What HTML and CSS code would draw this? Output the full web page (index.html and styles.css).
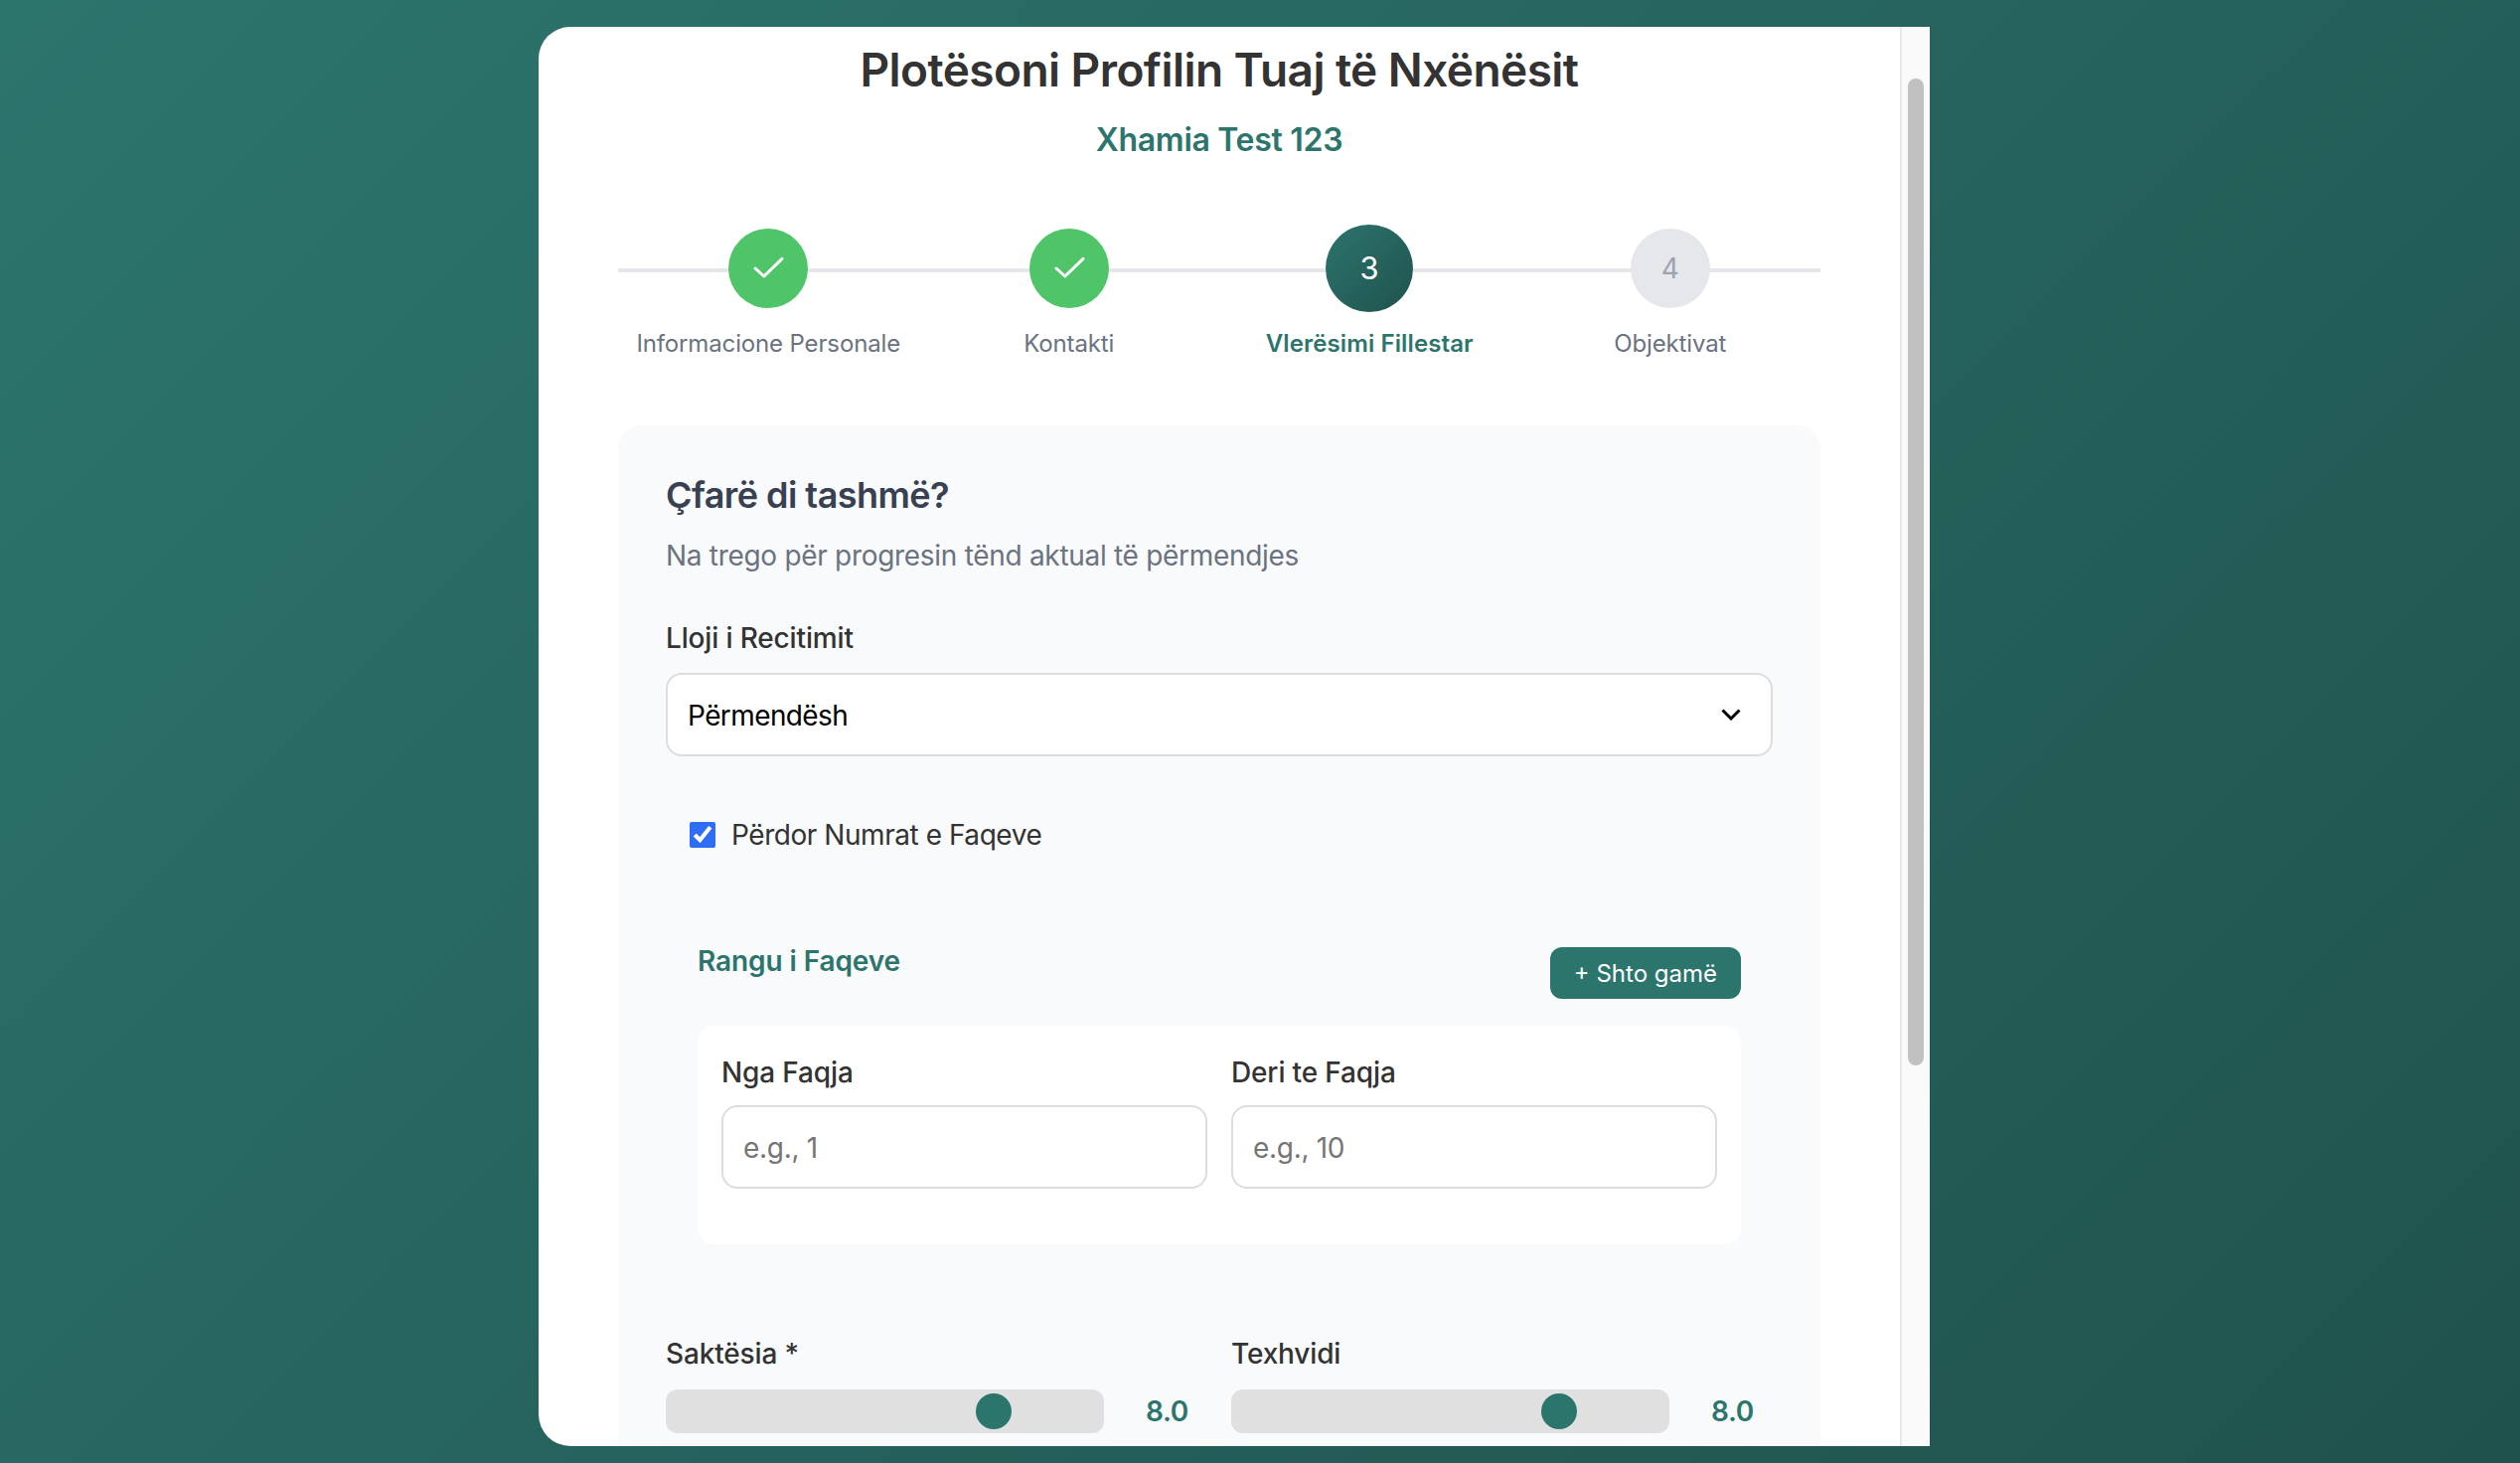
FILE: index.html
```html
<!DOCTYPE html>
<html lang="sq">
  <head>
    <meta charset="UTF-8" />
    <meta name="viewport" content="width=device-width, initial-scale=1.0" />
    <title>Plotësoni Profilin Tuaj të Nxënësit</title>
    <link rel="stylesheet" href="styles.css">
  </head>
  <body>
    <div class="card">
      <main class="content">
        <h1>Plotësoni Profilin Tuaj të Nxënësit</h1>
        <p class="subtitle">Xhamia Test 123</p>

        <!-- Hapat -->
        <div class="stepper">
          <div class="step done">
            <div class="circle">
              <svg class="check" viewBox="0 0 32 24" width="32" height="24"><polyline points="3,12 11.8,20 30,2.3" /></svg>
            </div>
            <span class="step-label">Informacione Personale</span>
          </div>
          <div class="step done">
            <div class="circle">
              <svg class="check" viewBox="0 0 32 24" width="32" height="24"><polyline points="3,12 11.8,20 30,2.3" /></svg>
            </div>
            <span class="step-label">Kontakti</span>
          </div>
          <div class="step active">
            <div class="circle">3</div>
            <span class="step-label">Vlerësimi Fillestar</span>
          </div>
          <div class="step">
            <div class="circle">4</div>
            <span class="step-label">Objektivat</span>
          </div>
        </div>

        <section class="panel">
          <h2>Çfarë di tashmë?</h2>
          <p class="panel-desc">Na trego për progresin tënd aktual të përmendjes</p>

          <label class="field-label" for="lloji">Lloji i Recitimit</label>
          <div class="select-wrap">
            <select id="lloji" class="select">
              <option>Përmendësh</option>
            </select>
            <svg class="chevron" viewBox="0 0 20 12" width="20" height="12"><polyline points="1.5,1.5 10,10 18.5,1.5" /></svg>
          </div>

          <label class="check-row">
            <input type="checkbox" checked />
            <span>Përdor Numrat e Faqeve</span>
          </label>

          <div class="range-section">
            <div class="range-head">
              <h4>Rangu i Faqeve</h4>
              <button class="add-btn" type="button">+ Shto gamë</button>
            </div>
            <div class="range-box">
              <div class="range-col">
                <label class="field-label">Nga Faqja</label>
                <input class="text-input" type="text" placeholder="e.g., 1" />
              </div>
              <div class="range-col">
                <label class="field-label">Deri te Faqja</label>
                <input class="text-input" type="text" placeholder="e.g., 10" />
              </div>
            </div>
          </div>

          <div class="sliders">
            <div>
              <label class="field-label">Saktësia *</label>
              <div class="slider-row">
                <input class="slider" type="range" min="1" max="10" step="0.01" value="7.93" />
                <span class="slider-value">8.0</span>
              </div>
            </div>
            <div>
              <label class="field-label">Texhvidi</label>
              <div class="slider-row">
                <input class="slider" type="range" min="1" max="10" step="0.01" value="7.93" />
                <span class="slider-value">8.0</span>
              </div>
            </div>
          </div>
        </section>
      </main>

      <div class="scroll-track">
        <div class="scroll-thumb"></div>
      </div>
    </div>
  </body>
</html>
```

FILE: styles.css
```css
:root {
  --teal: #2c756d;
  --teal-dark: #20524d;
  --gray-line: #e5e7eb;
}

* {
  box-sizing: border-box;
}

html,
body {
  height: 100%;
}

body {
  margin: 0;
  overflow: hidden;
  display: flex;
  justify-content: center;
  padding: 27px 52px 0 0;
  font-family: Inter, "Noto Sans", sans-serif;
  background: linear-gradient(135deg, var(--teal) 0%, var(--teal-dark) 100%);
  color: #333;
}

.card {
  display: flex;
  width: 1400px;
  height: 1428px;
  background: #fff;
  border-radius: 32px 0 0 32px;
  overflow: hidden;
}

.content {
  flex: 1;
  min-width: 0;
  padding: 14px 80px 0 80px;
}

h1 {
  margin: 0;
  font-size: 46px;
  line-height: 58px;
  font-weight: 600;
  letter-spacing: -0.56px;
  text-align: center;
  color: #333;
}

.subtitle {
  margin: 22px 0 0;
  font-size: 32px;
  line-height: 40px;
  font-weight: 600;
  letter-spacing: -0.3px;
  text-align: center;
  color: var(--teal);
}

/* Hapat */
.stepper {
  position: relative;
  display: flex;
  margin-top: 69px;
}

.stepper::before {
  content: "";
  position: absolute;
  top: 40px;
  left: 0;
  right: 0;
  height: 4px;
  background: var(--gray-line);
}

.step {
  position: relative;
  flex: 1;
  display: flex;
  flex-direction: column;
  align-items: center;
}

.circle {
  width: 80px;
  height: 80px;
  border-radius: 50%;
  display: flex;
  align-items: center;
  justify-content: center;
  background: var(--gray-line);
  color: #9ca3af;
  font-size: 28px;
}

.step.done .circle {
  background: #50c468;
}

.step.active .circle {
  background: linear-gradient(135deg, var(--teal), var(--teal-dark));
  color: #fff;
  transform: scale(1.1);
}

.check polyline {
  fill: none;
  stroke: #fff;
  stroke-width: 3;
  stroke-linecap: round;
  stroke-linejoin: round;
}

.step-label {
  margin-top: 20px;
  font-size: 24px;
  line-height: 32px;
  letter-spacing: -0.14px;
  color: #6b7280;
}

.step.active .step-label {
  font-weight: 600;
  letter-spacing: 0.12px;
  color: var(--teal);
}

/* Paneli */
.panel {
  margin-top: 66px;
  padding: 48px;
  background: #f9fafb;
  border-radius: 24px;
}

h2 {
  margin: 0;
  font-size: 36px;
  line-height: 44px;
  font-weight: 600;
  letter-spacing: -0.56px;
  color: #374151;
}

.panel-desc {
  margin: 21px 0 0;
  font-size: 28px;
  line-height: 36px;
  letter-spacing: -0.3px;
  color: #6b7280;
}

.field-label {
  display: block;
  font-size: 28px;
  line-height: 34px;
  font-weight: 500;
  letter-spacing: -0.15px;
  color: #333;
}

.panel-desc + .field-label {
  margin-top: 48px;
}

.select-wrap {
  position: relative;
  margin-top: 18px;
}

.select,
.text-input {
  display: block;
  width: 100%;
  height: 84px;
  padding: 2px 20px 0;
  border: 2px solid #ddd;
  border-radius: 16px;
  background: #fff;
  font-family: inherit;
  font-size: 28px;
  letter-spacing: -0.3px;
  color: #000;
}

.select {
  letter-spacing: -0.6px;
  appearance: none;
  -webkit-appearance: none;
}

.text-input::placeholder {
  color: #757575;
}

.chevron {
  position: absolute;
  top: 36px;
  right: 32px;
  pointer-events: none;
}

.chevron polyline {
  fill: none;
  stroke: #000;
  stroke-width: 3;
}

.check-row {
  display: flex;
  align-items: center;
  gap: 16px;
  margin-top: 62px;
  padding-left: 24px;
  font-size: 28px;
  line-height: 34px;
  letter-spacing: -0.45px;
  color: #333;
}

.check-row input {
  width: 26px;
  height: 26px;
  margin: 0;
  accent-color: #2e6ef7;
}

/* Rangu i faqeve */
.range-section {
  margin-top: 93px;
  padding: 0 32px;
}

.range-head {
  display: flex;
  justify-content: space-between;
  align-items: flex-start;
}

h4 {
  margin: 0;
  font-size: 28px;
  line-height: 34px;
  font-weight: 600;
  letter-spacing: -0.1px;
  color: var(--teal);
}

.add-btn {
  height: 52px;
  margin-top: 3px;
  padding: 0 24px;
  border: none;
  border-radius: 12px;
  background: var(--teal);
  color: #fff;
  font-family: inherit;
  font-size: 24px;
}

.range-box {
  display: grid;
  grid-template-columns: 1fr 1fr;
  gap: 24px;
  margin-top: 27px;
  padding: 30px 24px 56px;
  background: #fff;
  border-radius: 16px;
}

.range-col .text-input {
  margin-top: 16px;
}

/* Sliderat */
.sliders {
  display: grid;
  grid-template-columns: 1fr 1fr;
  gap: 24px;
  margin-top: 93px;
}

.slider-row {
  display: flex;
  align-items: center;
  gap: 42px;
  margin-top: 19px;
}

.slider {
  flex: 1;
  min-width: 0;
  height: 44px;
  margin: 0;
  border-radius: 12px;
  background: #e0e0e0;
  appearance: none;
  -webkit-appearance: none;
}

.slider::-webkit-slider-thumb {
  -webkit-appearance: none;
  width: 36px;
  height: 36px;
  border-radius: 50%;
  background: var(--teal);
}

.slider-value {
  min-width: 62px;
  font-size: 28px;
  font-weight: 600;
  letter-spacing: -0.3px;
  color: var(--teal);
}

/* Scrollbar */
.scroll-track {
  flex: none;
  width: 30px;
  padding: 52px 6px 0 6px;
  border-left: 2px solid #e8e8e8;
  background: #fafafa;
}

.scroll-thumb {
  height: 993px;
  border-radius: 8px;
  background: #c1c1c1;
}
```
